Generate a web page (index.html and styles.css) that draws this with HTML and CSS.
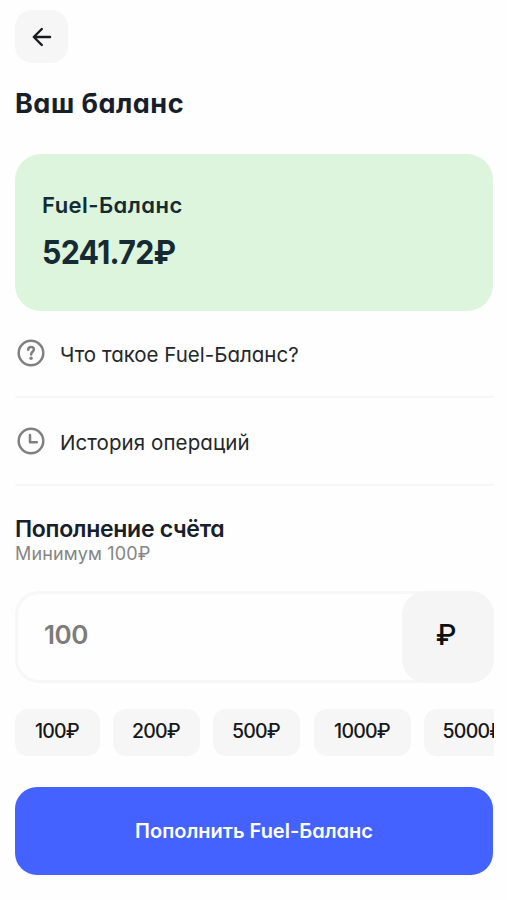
FILE: index.html
```html
<!DOCTYPE html>
<html lang="ru">
<head>
<meta charset="utf-8">
<meta name="viewport" content="width=device-width, initial-scale=1">
<title>Ваш баланс</title>
<link rel="stylesheet" href="styles.css">
</head>
<body>
<main class="page">
  <button class="back" aria-label="Назад">
    <svg width="20" height="20" viewBox="0 0 20 20"><path d="M18 10H2M9.800 2L1.800 10L9.800 18"/></svg>
  </button>
  <h1 class="title"><span>Ваш баланс</span></h1>
  <section class="card">
    <div class="card-name"><span>Fuel-Баланс</span></div>
    <div class="card-sum"><span>5241.72₽</span></div>
  </section>
  <nav class="links">
    <a class="link">
      <svg class="icon" width="28" height="28" viewBox="0 0 28 28"><circle cx="14" cy="14" r="12.300"/><path class="mark" d="M11.200 10.700C11.300 9 12.400 8.100 14 8.100C15.700 8.100 16.900 9.100 16.900 10.600C16.900 12.700 14.100 12.800 14.100 15.400"/><circle class="dot" cx="14.100" cy="19.300" r="1.700"/></svg>
      <span class="link-help">Что такое Fuel-Баланс?</span>
    </a>
    <a class="link">
      <svg class="icon" width="28" height="28" viewBox="0 0 28 28"><circle cx="14" cy="14" r="12.300"/><path d="M13 8V15.200H19.800"/></svg>
      <span class="link-history">История операций</span>
    </a>
  </nav>
  <h2 class="subtitle"><span>Пополнение счёта</span></h2>
  <p class="hint"><span>Минимум 100₽</span></p>
  <div class="field">
    <span class="value">100</span>
    <span class="currency">₽</span>
  </div>
  <div class="chips">
    <button class="chip">100₽</button>
    <button class="chip chip-200">200₽</button>
    <button class="chip chip-500">500₽</button>
    <button class="chip chip-1000">1000₽</button>
    <button class="chip chip-5000">5000₽</button>
  </div>
  <button class="submit"><span>Пополнить Fuel-Баланс</span></button>
</main>
</body>
</html>
```
FILE: styles.css
```css
* { box-sizing: border-box; }
body {
  margin: 0;
  background: #fefefe;
  color: #17202a;
  font-family: Inter, "Liberation Sans", sans-serif;
  font-feature-settings: "cv11";
}
button { border: 0; padding: 0; font: inherit; font-feature-settings: inherit; color: inherit; }
.page { width: 507px; height: 900px; padding: 10px 13px 0 15px; overflow: hidden; }
.back {
  display: flex; align-items: center; justify-content: center;
  width: 53px; height: 53px; border-radius: 17px; background: #f6f6f6;
}
.back svg { fill: none; stroke: #17191f; stroke-width: 2.400; stroke-linecap: round; stroke-linejoin: round; }
.title { margin: 21px 0 0; font-size: 27px; line-height: 40px; font-weight: 700; letter-spacing: 0.500px; }
.card {
  width: 478px; height: 157px; margin-top: 30px; padding: 35px 27px 0;
  border-radius: 26px; background: #dcf5dc; color: #152a32;
}
.card-name { font-size: 22px; line-height: 32px; font-weight: 600; letter-spacing: 0.450px; }
.card-sum { margin-top: 11px; font-size: 33px; line-height: 40px; font-weight: 700; letter-spacing: -0.800px; }
.card-sum span { display: inline-block; transform: scaleX(0.920); transform-origin: left; }
.links { margin-bottom: 27px; }
.link {
  display: flex; align-items: center; gap: 15px; height: 88px; padding: 0 0 1px 2px;
  border-bottom: 2px solid #f7f7f7;
  font-size: 20.500px; line-height: 28px; color: #24262a;
}
.link span { padding-top: 4px; }
.link-history { letter-spacing: 0.080px; }
.link:first-child { height: 87px; }
.icon { flex: none; fill: none; stroke: #808080; stroke-width: 2.500; stroke-linecap: round; stroke-linejoin: round; }
.icon .dot { fill: #808080; stroke: none; }
.subtitle { margin: 0; font-size: 23px; line-height: 32px; font-weight: 600; letter-spacing: -0.300px; }
.hint { margin: -1px 0 0; font-size: 18px; line-height: 20px; letter-spacing: 0.150px; color: #858585; }
.field {
  display: flex; justify-content: space-between; align-items: center;
  width: 479px; height: 92px; margin-top: 27px; padding-left: 26px;
  border: 3px solid #f7f7f7; border-radius: 24px; background: #fefefe;
}
.value { padding-bottom: 4px; font-size: 26px; line-height: 32px; font-weight: 600; letter-spacing: -0.400px; color: #7c7c7c; }
.currency {
  display: flex; align-items: center; justify-content: center;
  width: 92px; height: 92px; margin-right: -3px; padding: 0 4px 5px 0; border-radius: 24px;
  background: #f5f5f5; color: #111; font-size: 29px; font-weight: 500;
}
.chips { display: flex; gap: 13px; width: 479px; margin-top: 26px; overflow: hidden; }
.chip {
  flex: none; width: 85px; height: 47px; padding: 0 1px 3px 0; border-radius: 13px;
  background: #f6f6f6; color: #17181a; font-size: 19.500px; font-weight: 500; letter-spacing: -0.800px;
}
.chip-200, .chip-500 { width: 87px; }
.chip-1000 { width: 97px; margin-left: 1px; }
.chip-5000 { width: 98px; }
.submit {
  display: block; width: 478px; height: 88px; margin-top: 31px; padding-bottom: 1px; border-radius: 22px;
  background: #4462ff; color: #fff; font-size: 20px; line-height: 28px; font-weight: 600;
}
```
